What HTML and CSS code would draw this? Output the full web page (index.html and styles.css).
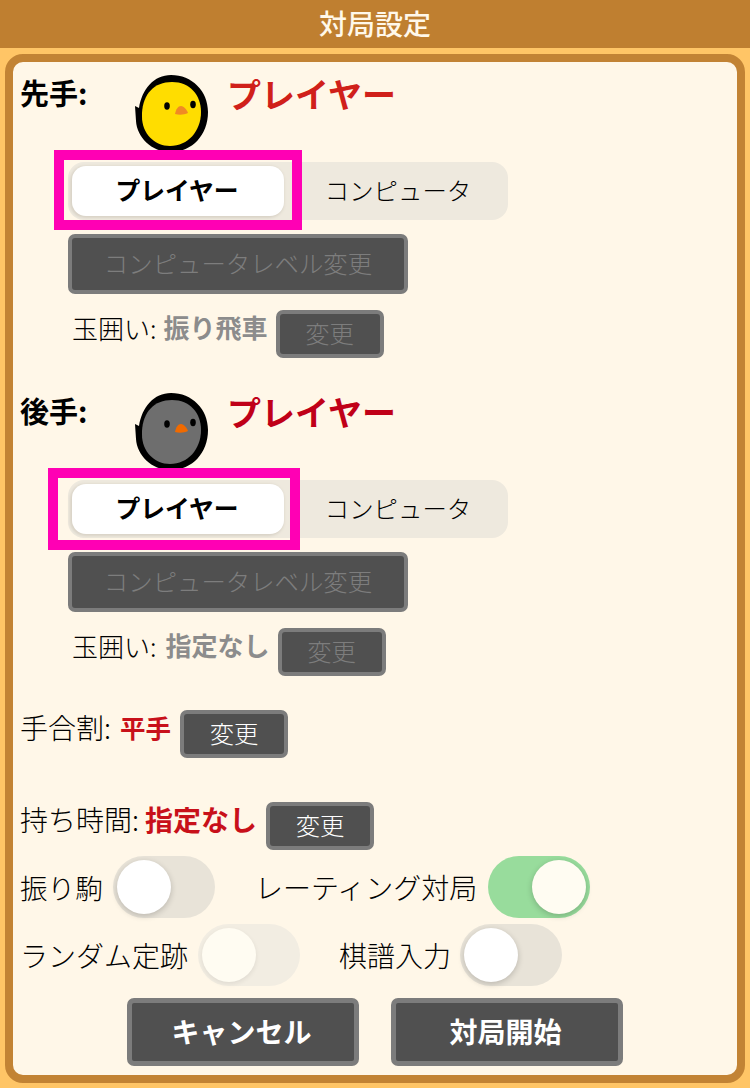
FILE: index.html
```html
<!DOCTYPE html>
<html lang="ja">
<head>
  <meta charset="UTF-8" />
  <title>対局設定</title>
  <link rel="stylesheet" href="styles.css">
</head>
<body>
  <header class="title-bar">対局設定</header>
  <div class="card">

    <div class="player-row">
      <span class="player-label">先手:</span>
      <svg class="bird bird-black" viewBox="0 0 75 77">
        <path class="bird-outline" d="M1 31L5 33C8 14 20 0 37 0C58 0 74 16 74 37C74 60 58 77 37 77C17 77 3 62 2 46Z"/>
        <path class="bird-body" d="M8 38C9 19 20 7 38 7C56 7 67 20 67 37C67 56 54 71 36 71C20 71 8 58 8 42Z"/>
        <ellipse class="bird-eye" cx="33" cy="31" rx="2.8" ry="3.7"/>
        <ellipse class="bird-eye" cx="59" cy="29.5" rx="2.8" ry="3.7"/>
        <path class="bird-beak" d="M41 39C42 34 44 31 47 31C50 31 53 35 54 38C50 40 45 40 41 39Z"/>
      </svg>
      <span class="player-name name-first">プレイヤー</span>
    </div>
    <div class="segment">
      <div class="seg-tab seg-on">プレイヤー</div>
      <div class="seg-tab">コンピュータ</div>
      <div class="highlight highlight-first"></div>
    </div>
    <button class="btn btn-level" disabled>コンピュータレベル変更</button>
    <div class="castle-row">
      <span class="label">玉囲い:</span>
      <span class="value-off">振り飛車</span>
      <button class="btn btn-small" disabled>変更</button>
    </div>

    <div class="player-row player-second">
      <span class="player-label">後手:</span>
      <svg class="bird bird-white" viewBox="0 0 75 77">
        <path class="bird-outline" d="M1 31L5 33C8 14 20 0 37 0C58 0 74 16 74 37C74 60 58 77 37 77C17 77 3 62 2 46Z"/>
        <path class="bird-body" d="M8 38C9 19 20 7 38 7C56 7 67 20 67 37C67 56 54 71 36 71C20 71 8 58 8 42Z"/>
        <ellipse class="bird-eye" cx="33" cy="31" rx="2.8" ry="3.7"/>
        <ellipse class="bird-eye" cx="59" cy="29.5" rx="2.8" ry="3.7"/>
        <path class="bird-beak" d="M41 39C42 34 44 31 47 31C50 31 53 35 54 38C50 40 45 40 41 39Z"/>
      </svg>
      <span class="player-name name-second">プレイヤー</span>
    </div>
    <div class="segment">
      <div class="seg-tab seg-on">プレイヤー</div>
      <div class="seg-tab">コンピュータ</div>
      <div class="highlight highlight-second"></div>
    </div>
    <button class="btn btn-level" disabled>コンピュータレベル変更</button>
    <div class="castle-row">
      <span class="label">玉囲い:</span>
      <span class="value-off value-none">指定なし</span>
      <button class="btn btn-small" disabled>変更</button>
    </div>

    <div class="setting-row handicap-row">
      <span class="label label-large">手合割:</span>
      <span class="value-red value-handicap">平手</span>
      <button class="btn btn-small">変更</button>
    </div>
    <div class="setting-row time-row">
      <span class="label label-large">持ち時間:</span>
      <span class="value-red">指定なし</span>
      <button class="btn btn-small">変更</button>
    </div>

    <div class="toggle-row">
      <span class="toggle-label label-furi">振り駒</span>
      <div class="toggle"><span class="knob"></span></div>
      <span class="toggle-label label-rating">レーティング対局</span>
      <div class="toggle toggle-on"><span class="knob"></span></div>
    </div>
    <div class="toggle-row">
      <span class="toggle-label label-random">ランダム定跡</span>
      <div class="toggle toggle-off"><span class="knob"></span></div>
      <span class="toggle-label label-kifu">棋譜入力</span>
      <div class="toggle"><span class="knob"></span></div>
    </div>

    <div class="actions">
      <button class="btn btn-action">キャンセル</button>
      <button class="btn btn-action">対局開始</button>
    </div>
  </div>
</body>
</html>
```

FILE: styles.css
```css
* {
  box-sizing: border-box;
}
body {
  margin: 0;
  height: 1088px;
  overflow: hidden;
  background-color: #ffc566;
  font-family: "Noto Sans CJK JP", "Noto Sans", sans-serif;
  font-weight: 300;
  color: #000;
}
.title-bar {
  height: 48px;
  line-height: 47px;
  text-align: center;
  background-color: #bf7f30;
  color: #fff8ea;
  font-size: 28px;
  font-weight: 500;
}
.card {
  height: 1029px;
  margin: 6px 5px 0;
  padding: 13px 0 0 8px;
  background-color: #fff7e8;
  border: 8px solid #c28334;
  border-radius: 18px;
}
.player-row {
  display: flex;
  height: 77px;
}
.player-second {
  margin-top: 35px;
}
.player-label {
  width: 114px;
  margin-left: -1px;
  font-size: 29px;
  font-weight: 700;
  line-height: 34px;
  flex: none;
  box-sizing: content-box;
}
.bird {
  width: 75px;
  height: 77px;
  flex: none;
}
.bird-outline {
  fill: #000;
}
.bird-black .bird-body {
  fill: #ffdd00;
}
.bird-white .bird-body {
  fill: #6e6e6e;
}
.bird-eye {
  fill: #000;
}
.bird-black .bird-beak {
  fill: #f08a24;
}
.bird-white .bird-beak {
  fill: #f06a00;
}
.player-name {
  margin-left: 18px;
  font-size: 34px;
  font-weight: 700;
  line-height: 37px;
}
.name-first {
  color: #d0201a;
}
.name-second {
  color: #c00018;
}
.segment {
  position: relative;
  display: flex;
  width: 440px;
  height: 58px;
  margin: 10px 0 0 47px;
  background-color: #eee9de;
  border-radius: 16px;
}
.seg-tab {
  width: 220px;
  height: 50px;
  margin: 4px;
  font-size: 24.4px;
  line-height: 47px;
  text-align: center;
}
.seg-on {
  padding-right: 2px;
  background-color: #fff;
  border-radius: 14px;
  font-size: 24.8px;
  font-weight: 700;
  box-shadow: -1px 1px 3px 1px #d8d2c6;
}
.highlight {
  position: absolute;
  top: -12px;
  height: 80px;
  border: 10px solid #ff00b4;
}
.highlight-first {
  left: -14px;
  width: 248px;
}
.highlight-second {
  left: -20px;
  width: 252px;
  height: 82px;
}
.btn {
  display: block;
  padding: 0 0 3px;
  background-color: #505050;
  border: 4px solid #7c7c7c;
  border-radius: 7px;
  color: #fff;
  font-family: inherit;
  font-weight: 300;
}
.btn:disabled {
  color: #7d7d7d;
}
.btn-level {
  width: 340px;
  height: 60px;
  margin: 14px 0 0 47px;
  font-size: 24.4px;
}
.btn-small {
  width: 108px;
  height: 48px;
  font-size: 24.4px;
}
.btn-action {
  width: 232px;
  height: 68px;
  border-width: 5px;
  padding: 0 3px 2px 0;
  font-size: 28px;
  font-weight: 700;
}
.castle-row {
  display: flex;
  height: 48px;
  margin: 16px 0 0 51px;
}
.setting-row {
  display: flex;
  height: 48px;
  margin-left: -1px;
}
.handicap-row {
  margin-top: 34px;
}
.time-row {
  margin-top: 44px;
}
.label {
  font-size: 26px;
  line-height: 35px;
}
.label-large {
  font-size: 28px;
  line-height: 34px;
}
.value-off {
  margin: 0 8px 0 7px;
  color: #8c8c8c;
  font-size: 26px;
  font-weight: 700;
  line-height: 34px;
}
.value-none {
  margin-left: 9px;
}
.value-red {
  margin: 0 9px 0 6px;
  color: #c8101a;
  font-size: 28px;
  font-weight: 700;
  line-height: 35px;
}
.value-handicap {
  margin: 0 9px 0 9px;
  font-size: 25.5px;
  line-height: 34px;
}
.toggle-row {
  display: flex;
  align-items: center;
  height: 62px;
  margin: 6px 0 0 -1px;
}
.toggle-label {
  font-size: 28px;
}
.label-furi {
  width: 93px;
  font-size: 27.6px;
}
.label-rating {
  width: 233px;
  margin-left: 40px;
}
.label-random {
  width: 178px;
}
.label-kifu {
  width: 121px;
  margin-left: 39px;
}
.toggle {
  display: flex;
  width: 102px;
  height: 62px;
  padding: 4px;
  background-color: #e8e3d8;
  border-radius: 31px;
}
.knob {
  width: 54px;
  height: 54px;
  background-color: #fff;
  border-radius: 50%;
  box-shadow: 0 2px 6px rgba(0, 0, 0, 0.2);
}
.toggle-on {
  justify-content: flex-end;
  background-color: #98dc9c;
}
.toggle-on .knob {
  background-color: #fffcf2;
}
.toggle-off {
  background-color: #f2ede2;
}
.toggle-off .knob {
  background-color: #fffcf2;
  box-shadow: 0 2px 5px rgba(0, 0, 0, 0.08);
}
.actions {
  display: flex;
  gap: 32px;
  margin: 12px 0 0 106px;
}
```
